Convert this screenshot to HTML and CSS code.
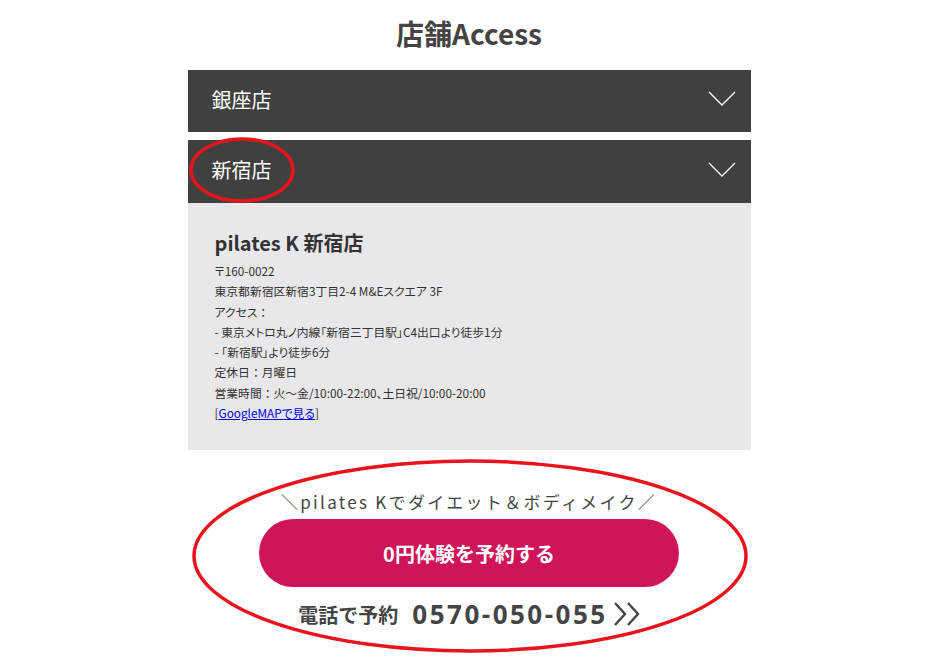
FILE: index.html
```html
<!DOCTYPE html>
<html lang="ja">
<head>
  <meta charset="UTF-8" />
  <title>店舗Access</title>
  <link rel="stylesheet" href="styles.css">
</head>
<body>
  <div class="access">
    <h2 class="access-title">店舗Access</h2>
    <div class="shop">
      <div class="shop-head">
        <span>銀座店</span>
        <svg class="chev" width="28" height="16" viewBox="0 0 28 16"><polyline points="1,1 14,14 27,1" fill="none" stroke="#fff" stroke-width="1.3"/></svg>
      </div>
    </div>
    <div class="shop open">
      <div class="shop-head">
        <span>新宿店</span>
        <svg class="chev" width="28" height="16" viewBox="0 0 28 16"><polyline points="1,1 14,14 27,1" fill="none" stroke="#fff" stroke-width="1.3"/></svg>
      </div>
      <div class="shop-body">
        <h3>pilates K 新宿店</h3>
        <p>〒160-0022<br>
        東京都新宿区新宿3丁目2-4 M&amp;Eスクエア 3F<br>
        アクセス<span class="colon">：</span><br>
        - 東京メトロ丸ノ内線「新宿三丁目駅」C4出口より徒歩1分<br>
        - 「新宿駅」より徒歩6分<br>
        定休日<span class="colon">：</span>月曜日<br>
        営業時間<span class="colon">：</span>火〜金/10:00-22:00、土日祝/10:00-20:00<br>
        [<a href="#">GoogleMAPで見る</a>]</p>
      </div>
    </div>

    <div class="cta">
      <p class="catch"><span class="slash">＼</span>pilates Kでダイエット＆ボディメイク<span class="slash">／</span></p>
      <a class="cta-btn" href="#">0円体験を予約する</a>
      <a class="tel" href="#">
        <span class="tel-label">電話で予約</span>
        <span class="tel-num">0570-050-055</span>
        <svg width="30" height="26" viewBox="0 0 30 26"><polyline points="3,2 13,13 3,24" fill="none" stroke="#444" stroke-width="2.4"/><polyline points="16,2 26,13 16,24" fill="none" stroke="#444" stroke-width="2.4"/></svg>
      </a>
    </div>
  </div>

  <svg class="marks" width="940" height="659" viewBox="0 0 940 659">
    <ellipse cx="242" cy="170" rx="51" ry="31" fill="none" stroke="#e8141c" stroke-width="3.5"/>
    <ellipse cx="470" cy="556" rx="276" ry="95" fill="none" stroke="#e8141c" stroke-width="3.5"/>
  </svg>
</body>
</html>
```

FILE: styles.css
```css
body {
  margin: 0;
  font-family: "Noto Sans CJK JP", "Noto Sans", sans-serif;
  color: #333;
  background: #fff;
}
.access {
  width: 563px;
  margin: 0 auto;
  padding-top: 12px;
  transform: translateX(-1px);
}
.access-title {
  margin: 0 0 16px;
  font-size: 28px;
  line-height: 42px;
  text-align: center;
  color: #444;
  font-weight: 700;
}
.shop {
  margin-bottom: 8px;
}
.shop.open {
  margin-bottom: 0;
}
.shop-head {
  height: 62px;
  background: #404040;
  color: #fff;
  display: flex;
  align-items: center;
  justify-content: space-between;
  padding: 0 15px 0 24px;
  font-size: 20px;
}
.shop-head span {
  margin-top: -4px;
}
.chev {
  margin-top: -4px;
}
.shop.open .shop-head {
  height: 63px;
}
.shop-body {
  background: #e8e8ea;
  padding: 26px 27px 28px;
  height: 193px;
}
.shop-body h3 {
  margin: 0 0 4px;
  font-size: 20px;
  line-height: 28px;
  color: #333;
}
.shop-body p {
  margin: 0;
  font-size: 11.8px;
  line-height: 20.3px;
  color: #333;
  font-feature-settings: "palt";
}
.shop-body .colon {
  font-feature-settings: normal;
}
.shop-body a {
  color: #00e;
}
.cta {
  display: flex;
  flex-direction: column;
  align-items: center;
  padding-top: 40px;
}
.catch {
  margin: 0;
  font-size: 17px;
  line-height: 24px;
  letter-spacing: 2.3px;
  color: #444;
}
.slash {
  font-weight: 300;
  color: #444;
}
.cta-btn {
  margin-top: 5px;
  width: 420px;
  height: 68px;
  border-radius: 34px;
  background: #d0145a;
  color: #fff;
  font-size: 20px;
  font-weight: 700;
  display: flex;
  align-items: center;
  justify-content: center;
  text-decoration: none;
}
.tel {
  margin-top: 9px;
  display: flex;
  align-items: center;
  gap: 14px;
  color: #444;
  text-decoration: none;
  margin-left: 2px;
}
.tel-label {
  font-size: 20px;
  font-weight: 700;
}
.tel-num {
  font-size: 26px;
  font-weight: 700;
  letter-spacing: 2.5px;
  font-family: "Open Sans", "Noto Sans", sans-serif;
}
.tel svg {
  margin-left: -10px;
}
.marks {
  position: absolute;
  left: 0;
  top: 0;
  pointer-events: none;
}
```
